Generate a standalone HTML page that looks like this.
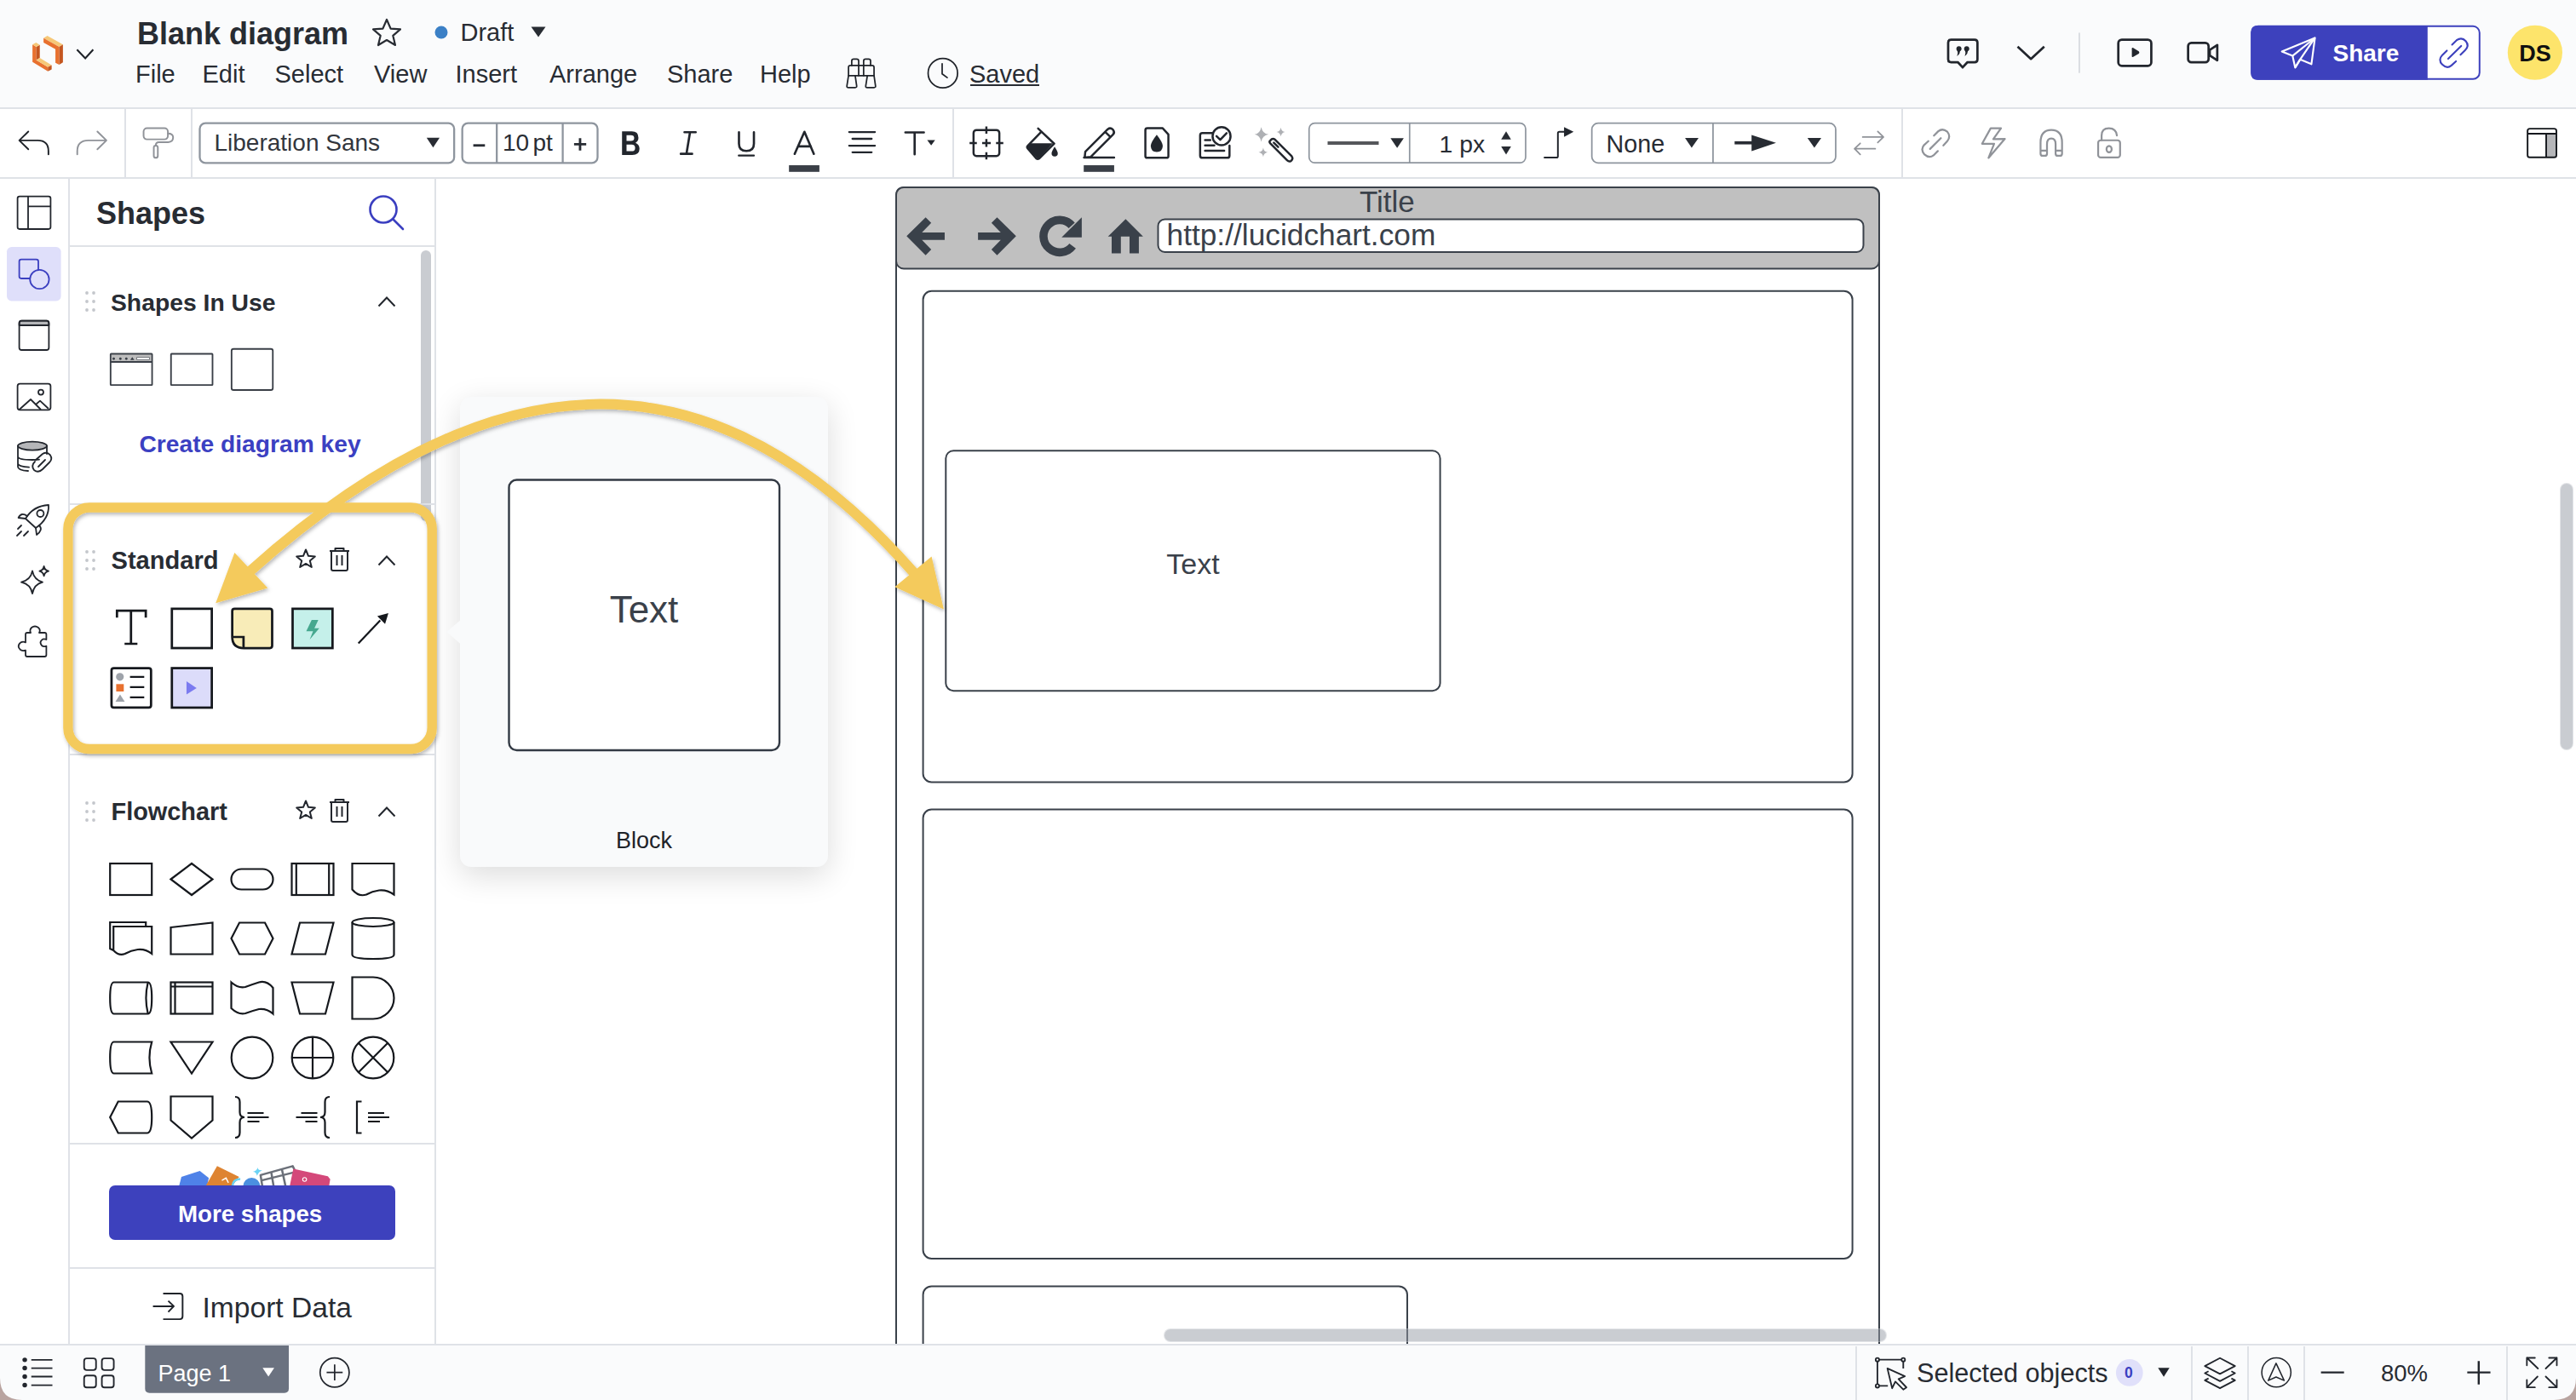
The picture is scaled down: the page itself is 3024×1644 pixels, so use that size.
<!DOCTYPE html>
<html><head><meta charset="utf-8"><style>
html,body{margin:0;padding:0;}
body{width:3024px;height:1644px;position:relative;overflow:hidden;background:#fff;font-family:"Liberation Sans", sans-serif;}
svg{overflow:visible}
</style></head><body>
<div style="position:absolute;left:0px;top:0px;width:3024px;height:126px;background:#fafbfc"></div><div style="position:absolute;left:0px;top:126px;width:3024px;height:2px;background:#dfe2e7"></div><div style="position:absolute;left:0px;top:128px;width:3024px;height:80px;background:#fff"></div><div style="position:absolute;left:0px;top:208px;width:3024px;height:2px;background:#dfe2e7"></div><div style="position:absolute;left:0px;top:210px;width:80px;height:1369px;background:#fff"></div><div style="position:absolute;left:80px;top:210px;width:2px;height:1369px;background:#dfe2e7"></div><div style="position:absolute;left:82px;top:210px;width:428px;height:1369px;background:#fff"></div><div style="position:absolute;left:510px;top:210px;width:2px;height:1369px;background:#dfe2e7"></div><div style="position:absolute;left:0px;top:1578px;width:3024px;height:2px;background:#dfe2e7"></div><div style="position:absolute;left:0px;top:1580px;width:3024px;height:64px;background:#fafbfc"></div><svg style="position:absolute;left:30px;top:30px;" width="90" height="65" viewBox="0 0 1938 1400">
<polygon points="175,480 270,540 270,870 565,1050 565,1160 175,920" fill="#e8712f"/>
<polygon points="270,540 360,490 360,820 270,870" fill="#c4561f"/>
<polygon points="175,480 265,430 360,490 270,540" fill="#f6c878"/>
<polygon points="270,870 360,820 660,1000 565,1050" fill="#f6c878"/>
<polygon points="565,1050 660,1000 660,1110 565,1160" fill="#c4561f"/>
<polygon points="455,320 550,260 945,480 850,540" fill="#f6c878"/>
<polygon points="455,320 850,540 850,990 755,940 755,600 455,430" fill="#e8712f"/>
<polygon points="850,540 945,480 945,930 850,990" fill="#c4561f"/>
<polyline points="1300,610 1510,830 1710,610" fill="none" stroke="#1f2329" stroke-width="45"/>
</svg><div style="position:absolute;left:161px;top:22.0px;font-size:36px;line-height:36px;font-weight:700;color:#282c33;white-space:nowrap;">Blank diagram</div><svg style="position:absolute;left:436px;top:21px;" width="36" height="34" viewBox="0 0 36 34"><polygon points="18,2 22.6,12.6 34,13.4 25.3,20.8 28,32 18,26 8,32 10.7,20.8 2,13.4 13.4,12.6" fill="none" stroke="#282c33" stroke-width="2.2" stroke-linejoin="round"/></svg><svg style="position:absolute;left:510px;top:30px;" width="16" height="16" viewBox="0 0 16 16"><circle cx="8" cy="8" r="7.5" fill="#3b80c6"/></svg><div style="position:absolute;left:540.5px;top:23.5px;font-size:29px;line-height:29px;font-weight:400;color:#282c33;white-space:nowrap;">Draft</div><svg style="position:absolute;left:623px;top:31px;" width="18" height="13" viewBox="0 0 18 13"><polygon points="0.5,0.5 17.5,0.5 9,12.5" fill="#282c33"/></svg><div style="position:absolute;left:159px;top:72.5px;font-size:29px;line-height:29px;font-weight:400;color:#282c33;white-space:nowrap;">File</div><div style="position:absolute;left:237.5px;top:72.5px;font-size:29px;line-height:29px;font-weight:400;color:#282c33;white-space:nowrap;">Edit</div><div style="position:absolute;left:322.5px;top:72.5px;font-size:29px;line-height:29px;font-weight:400;color:#282c33;white-space:nowrap;">Select</div><div style="position:absolute;left:439px;top:72.5px;font-size:29px;line-height:29px;font-weight:400;color:#282c33;white-space:nowrap;">View</div><div style="position:absolute;left:534.5px;top:72.5px;font-size:29px;line-height:29px;font-weight:400;color:#282c33;white-space:nowrap;">Insert</div><div style="position:absolute;left:645px;top:72.5px;font-size:29px;line-height:29px;font-weight:400;color:#282c33;white-space:nowrap;">Arrange</div><div style="position:absolute;left:783px;top:72.5px;font-size:29px;line-height:29px;font-weight:400;color:#282c33;white-space:nowrap;">Share</div><div style="position:absolute;left:892px;top:72.5px;font-size:29px;line-height:29px;font-weight:400;color:#282c33;white-space:nowrap;">Help</div><div style="position:absolute;left:1138px;top:72.5px;font-size:29px;line-height:29px;font-weight:400;color:#282c33;white-space:nowrap;">Saved</div><div style="position:absolute;left:1139px;top:99px;width:81px;height:2px;background:#282c33"></div><svg style="position:absolute;left:985px;top:60px;" width="150" height="52" viewBox="0 0 2576 893">
<g fill="none" stroke="#1f2329" stroke-width="30" stroke-linejoin="round" stroke-linecap="round">
<path d="M255,290 V200 Q255,160 295,160 H355 Q395,160 395,200 V290"/>
<path d="M495,290 V200 Q495,160 535,160 H595 Q635,160 635,200 V290"/>
<path d="M190,495 V330 Q190,290 230,290 H665 Q705,290 705,330 V495 Z"/>
<path d="M395,290 V495 M495,290 V495"/>
<path d="M190,495 L158,700 Q152,735 190,735 H325 Q360,735 355,700 L325,495"/>
<path d="M570,495 L538,700 Q532,735 570,735 H705 Q740,735 735,700 L705,495"/>
<circle cx="2092" cy="445" r="297"/>
<path d="M2078,255 V460 L2180,535"/>
</g>
</svg><svg style="position:absolute;left:2270px;top:30px;" width="350" height="70" viewBox="0 0 2576 515">
<g fill="none" stroke="#22262d" stroke-width="20" stroke-linejoin="round">
<path d="M150,122 H353 Q378,122 378,147 V293 Q378,318 353,318 H290 L250,362 L210,318 H150 Q125,318 125,293 V147 Q125,122 150,122 Z"/>
<polyline points="725,182 840,288 955,182"/>
<rect x="1595" y="122" width="285" height="226" rx="30"/>
<rect x="2198" y="150" width="177" height="168" rx="28"/>
<path d="M2385,210 L2450,168 V300 L2385,258 Z"/>
</g>
<g fill="#22262d">
<circle cx="218" cy="200" r="22"/><path d="M228,205 Q232,245 202,265 Q214,235 202,210 Z"/>
<circle cx="285" cy="200" r="22"/><path d="M295,205 Q299,245 269,265 Q281,235 269,210 Z"/>
<path d="M1712,200 Q1712,188 1724,194 L1772,222 Q1782,234 1772,242 L1724,270 Q1712,276 1712,264 Z"/>
</g>
<line x1="1258" y1="62" x2="1258" y2="410" stroke="#d9dce1" stroke-width="14"/>
</svg><svg style="position:absolute;left:2630px;top:20px;" width="394" height="85" viewBox="0 0 2576 556">
<rect x="86" y="71" width="1750" height="405" rx="50" fill="#fff" stroke="#3d41bd" stroke-width="13"/>
<path d="M130,65 H1437 V482 H130 Q80,482 80,432 V115 Q80,65 130,65 Z" fill="#3d41bd"/>
<g fill="none" stroke="#fff" stroke-width="14" stroke-linejoin="round">
<path d="M318,265 L572,160 L545,362 L458,326 L420,388 L400,298 Z"/>
<path d="M400,298 L572,160"/><path d="M420,388 L458,326 L572,160"/>
</g>
<g fill="none" stroke="#3d41bd" stroke-width="14" stroke-linecap="round">
<path d="M1625,212 L1660,178 Q1700,150 1730,185 Q1760,220 1725,255 L1690,290"/>
<path d="M1655,340 L1620,372 Q1585,400 1550,365 Q1515,330 1550,292 L1585,258"/>
<path d="M1595,320 L1695,222"/>
</g>
<circle cx="2262" cy="273" r="210" fill="#fde46b"/>
</svg><div style="position:absolute;left:2738.5px;top:49.1px;font-size:28px;line-height:28px;font-weight:700;color:#fff;white-space:nowrap;">Share</div><div style="position:absolute;left:2957.2px;top:49.9px;font-size:27px;line-height:27px;font-weight:700;color:#111;white-space:nowrap;">DS</div><div style="position:absolute;left:146px;top:128px;width:2px;height:80px;background:#dfe2e7"></div><div style="position:absolute;left:223.5px;top:128px;width:2px;height:80px;background:#dfe2e7"></div><div style="position:absolute;left:1118px;top:128px;width:2px;height:80px;background:#dfe2e7"></div><div style="position:absolute;left:2232px;top:128px;width:2px;height:80px;background:#dfe2e7"></div><svg style="position:absolute;left:10px;top:140px;" width="210" height="60" viewBox="0 0 2576 736">
<g fill="none" stroke-width="24" stroke-linecap="round" stroke-linejoin="round">
<path d="M285,178 L155,305 L285,432 M155,305 H420 Q575,305 575,460 V505" stroke="#1f2329"/>
<path d="M1280,178 L1410,305 L1280,432 M1410,305 H1150 Q990,305 990,460 V505" stroke="#909399"/>
<rect x="1945" y="128" width="350" height="162" rx="50" stroke="#909399"/>
<path d="M2295,205 Q2370,205 2370,262 Q2370,330 2300,330 H2165 Q2120,330 2120,380" stroke="#909399"/>
<rect x="2092" y="380" width="58" height="175" rx="29" stroke="#909399"/>
</g>
</svg><svg style="position:absolute;left:225px;top:138px;" width="490" height="60" viewBox="0 0 2576 315">
<g fill="none" stroke="#8e959e" stroke-width="12">
<rect x="50" y="35" width="1570" height="245" rx="35"/>
<rect x="1670" y="35" width="835" height="245" rx="35"/>
<path d="M1883,35 V280 M2290,35 V280"/>
</g>
<polygon points="1450,125 1530,125 1490,185" fill="#282c33"/>
<path d="M1738,172 H1810" stroke="#282c33" stroke-width="15"/>
<path d="M2360,165 H2435 M2397,127 V203" stroke="#282c33" stroke-width="15"/>
</svg><div style="position:absolute;left:251.5px;top:154.3px;font-size:28px;line-height:28px;font-weight:400;color:#32363d;white-space:nowrap;">Liberation Sans</div><div style="position:absolute;left:590px;top:153.8px;font-size:28px;line-height:28px;font-weight:400;color:#282c33;white-space:nowrap;">10</div><div style="position:absolute;left:625.5px;top:153.8px;font-size:28px;line-height:28px;font-weight:400;color:#282c33;white-space:nowrap;">pt</div><svg style="position:absolute;left:715px;top:140px;" width="400" height="66" viewBox="0 0 2576 425">
<path fill="#22262d" fill-rule="evenodd" d="M98,92 H172 Q222,92 222,140 Q222,166 200,178 Q230,192 230,224 Q230,270 175,270 H98 Z M132,120 V165 H165 Q190,165 190,142 Q190,120 165,120 Z M132,192 V242 H170 Q197,242 197,217 Q197,192 170,192 Z"/>
<g fill="none" stroke="#22262d" stroke-width="17" stroke-linecap="round" stroke-linejoin="round">
<path d="M570,98 H655 M542,262 H628 M612,98 L585,262"/>
<path d="M982,98 V185 Q982,240 1038,240 Q1095,240 1095,185 V98"/>
<path d="M980,275 H1095" stroke-width="14"/>
<path d="M1403,262 L1477,95 L1548,262 M1430,205 H1525"/>
<path d="M1815,97 H2010 M1840,148 H1985 M1815,200 H2010 M1840,250 H1985" stroke-width="15"/>
<path d="M2240,100 H2380 M2310,100 V265"/>
</g>
<polygon points="2405,157 2465,157 2435,198" fill="#22262d"/>
<rect x="1360" y="348" width="230" height="50" fill="#3a3f47"/>
</svg><svg style="position:absolute;left:1125px;top:140px;" width="400" height="66" viewBox="0 0 2576 425">
<g fill="none" stroke="#22262d" stroke-width="16" stroke-linecap="round" stroke-linejoin="round">
<rect x="115" y="82" width="195" height="196" rx="22"/>
<path d="M212,55 V110 M212,150 V210 M212,250 V305 M85,180 H140 M180,180 H245 M285,180 H340" stroke-linecap="butt"/>
<path d="M603,70 L725,185 L610,298 Q600,305 590,298 L525,222 Q515,210 525,200 L625,98"/>
<path d="M960,245 L1130,75 Q1150,60 1170,80 Q1185,100 1170,115 L1000,285 L955,290 Z M1110,95 L1150,135 M950,290 H1178"/>
<path d="M1430,68 H1545 L1588,115 V278 Q1588,292 1574,292 H1428 Q1414,292 1414,278 V82 Q1414,68 1430,68 Z"/>
<path d="M1918,105 H1845 Q1828,105 1828,122 V275 Q1828,292 1845,292 H2033 Q2050,292 2050,275 V200"/>
<circle cx="1990" cy="128" r="68"/>
<path d="M1952,128 L1980,155 L2028,105 M1865,158 H1905 M1865,198 H1935 M1865,238 H2010"/>
</g>
<path d="M550,182 H715 L610,295 Q603,302 595,295 L525,220 Q518,210 525,200 Z" fill="#22262d"/>
<path d="M728,208 Q752,245 752,258 Q752,282 728,282 Q705,282 705,258 Q705,245 728,208 Z" fill="#22262d"/>
<path d="M1500,118 Q1545,175 1545,202 Q1545,248 1500,248 Q1455,248 1455,202 Q1455,175 1500,118 Z" fill="#22262d"/>
<rect x="948" y="348" width="230" height="50" fill="#3a3f47"/>
<g fill="#aeb0b4">
<path d="M2290,60 Q2300,110 2345,115 Q2300,122 2290,170 Q2280,122 2240,115 Q2280,110 2290,60 Z"/>
<path d="M2438,62 Q2443,92 2470,97 Q2443,102 2438,130 Q2433,102 2405,97 Q2433,92 2438,62 Z"/>
<path d="M2305,215 Q2310,245 2338,250 Q2310,255 2305,285 Q2300,255 2270,250 Q2300,245 2305,215 Z"/>
</g>
<g fill="none" stroke="#22262d" stroke-width="16" stroke-linejoin="round">
<path d="M2360,160 Q2375,140 2395,155 L2520,280 Q2535,300 2515,315 Q2500,325 2485,310 L2360,185 Q2345,170 2360,160 Z"/>
<path d="M2385,178 L2418,210" stroke-linecap="round"/>
</g>
</svg><svg style="position:absolute;left:1530px;top:140px;" width="340" height="60" viewBox="0 0 2576 455">
<g fill="none" stroke="#8e959e" stroke-width="13">
<rect x="50" y="35" width="1928" height="353" rx="50"/>
<path d="M945,35 V388"/>
</g>
<path d="M215,212 H670" stroke="#55575b" stroke-width="30"/>
<polygon points="775,168 893,168 834,255" fill="#282c33"/>
<polygon points="1760,180 1848,180 1804,108" fill="#282c33"/>
<polygon points="1760,243 1848,243 1804,315" fill="#282c33"/>
<path d="M2140,342 H2252 Q2265,342 2265,330 V125 Q2265,112 2278,112 H2330" fill="none" stroke="#22262d" stroke-width="15"/>
<polygon points="2320,70 2405,112 2320,158" fill="#22262d"/>
</svg><div style="position:absolute;left:1689.5px;top:155.2px;font-size:28.4px;line-height:28.4px;font-weight:400;color:#282c33;white-space:nowrap;">1 px</div><svg style="position:absolute;left:1860px;top:140px;" width="380" height="60" viewBox="0 0 2576 407">
<g fill="none" stroke="#8e959e" stroke-width="12">
<rect x="58" y="32" width="1942" height="316" rx="50"/>
<path d="M1023,32 V348"/>
</g>
<polygon points="800,150 908,150 853,228" fill="#282c33"/>
<path d="M1195,188 H1340" stroke="#282c33" stroke-width="25"/>
<polygon points="1330,125 1525,188 1330,255" fill="#282c33"/>
<polygon points="1775,150 1885,150 1830,228" fill="#282c33"/>
<g fill="none" stroke="#909399" stroke-width="12" stroke-linecap="round" stroke-linejoin="round">
<path d="M2215,142 H2380 M2335,98 L2380,142 L2335,185"/>
<path d="M2315,235 H2150 M2195,192 L2150,235 L2195,280"/>
</g>
</svg><div style="position:absolute;left:1885.5px;top:154.8px;font-size:28.7px;line-height:28.7px;font-weight:400;color:#282c33;white-space:nowrap;">None</div><svg style="position:absolute;left:2240px;top:140px;" width="260" height="60" viewBox="0 0 2576 594">
<g fill="none" stroke="#909399" stroke-width="22" stroke-linecap="round" stroke-linejoin="round">
<path d="M300,190 L350,140 Q400,100 455,145 Q500,200 455,255 L410,305 M345,370 L295,420 Q245,460 190,410 Q140,355 185,300 L235,255 M255,345 L380,220"/>
<polygon points="960,105 1080,105 990,232 1125,228 935,450 1000,285 860,285"/>
<path d="M1540,400 V270 Q1540,125 1665,125 Q1790,125 1790,270 V400 Q1790,425 1765,425 H1740 Q1715,425 1715,400 V290 Q1715,225 1665,225 Q1615,225 1615,290 V400 Q1615,425 1590,425 H1565 Q1540,425 1540,400 Z M1540,365 H1615 M1715,365 H1790"/>
<rect x="2210" y="245" width="255" height="200" rx="30"/>
<path d="M2250,245 V190 Q2250,105 2335,105 Q2420,105 2428,190"/>
<ellipse cx="2337" cy="348" rx="30" ry="38"/>
</g>
</svg><svg style="position:absolute;left:2950px;top:140px;" width="70" height="60" viewBox="0 0 1633 1400">
<rect x="930" y="415" width="240" height="610" fill="#b5b6b9"/>
<g fill="none" stroke="#15181d" stroke-width="45">
<rect x="400" y="260" width="790" height="785" rx="60"/>
<path d="M400,395 H1190 M910,395 V1045"/>
</g>
</svg><svg style="position:absolute;left:0px;top:215px;" width="80" height="280" viewBox="0 0 400 1400">
<rect x="40" y="375" width="318" height="317" rx="28" fill="#dfdffa"/>
<g fill="none" stroke="#22262d" stroke-width="9" stroke-linejoin="round">
<rect x="103" y="78" width="194" height="192" rx="12"/>
<path d="M165,78 V270 M165,137 H297"/>
<path d="M113,835 V822 Q113,808 127,808 H273 Q287,808 287,822 V835 Z" fill="#b5b6b9"/>
<rect x="113" y="808" width="174" height="172" rx="14"/>
<path d="M113,835 H287"/>
<rect x="103" y="1178" width="194" height="154" rx="14"/>
<circle cx="240" cy="1228" r="15"/>
<path d="M113,1330 L180,1270 L240,1330 M210,1300 L235,1278 L285,1325"/>
</g>
<g fill="none" stroke="#3b3fc0" stroke-width="9">
<path d="M225,512 V460 Q225,448 213,448 H125 Q113,448 113,460 V548 Q113,560 125,560 H176"/>
<circle cx="232" cy="565" r="56"/>
</g>
</svg><svg style="position:absolute;left:0px;top:500px;" width="80" height="280" viewBox="0 0 400 1400">
<g fill="none" stroke="#22262d" stroke-width="9" stroke-linejoin="round" stroke-linecap="round">
<ellipse cx="190" cy="118" rx="85" ry="25" fill="#b5b6b9"/>
<path d="M105,118 V240 Q105,262 165,265 M105,180 Q105,200 190,200 Q215,200 230,198 M105,222 Q110,240 170,243 M275,118 V165"/>
<path d="M210,200 L250,165 Q275,150 295,172 Q310,195 290,215 L250,255 Q225,280 200,260 Q180,235 205,210"/>
<path d="M225,240 L265,200"/>
<path d="M150,545 Q195,470 285,465 Q290,545 210,600 Z"/>
<circle cx="237" cy="515" r="20"/>
<path d="M160,530 Q125,505 108,540 L150,545 M230,585 Q255,610 215,640 L210,600"/>
<path d="M100,645 L125,620 M140,645 L165,620 M105,605 L125,585"/>
<path d="M190,852 Q200,905 250,918 Q200,930 190,985 Q180,930 125,918 Q180,905 190,852 Z"/>
<path d="M258,825 Q262,848 285,853 Q262,858 258,882 Q254,858 232,853 Q254,848 258,825 Z"/>
<path d="M150,1235 V1225 Q150,1215 160,1215 H180 Q172,1198 185,1185 Q205,1170 225,1185 Q240,1198 230,1215 H262 Q272,1215 272,1225 V1255 Q255,1248 245,1258 Q230,1272 245,1290 Q255,1300 272,1293 V1345 Q272,1355 262,1355 H160 Q150,1355 150,1345 V1318 Q135,1325 120,1315 Q100,1298 115,1278 Q130,1262 150,1272 Z"/>
</g>
</svg><div style="position:absolute;left:113px;top:233.0px;font-size:36px;line-height:36px;font-weight:700;color:#282c33;white-space:nowrap;">Shapes</div><svg style="position:absolute;left:430px;top:226px;" width="50" height="46" viewBox="0 0 50 46"><g fill="none" stroke="#3b3fc0" stroke-width="2.6" stroke-linecap="round"><circle cx="20" cy="20" r="15.5"/><path d="M31.5,31.5 L43,43"/></g></svg><div style="position:absolute;left:82px;top:288px;width:428px;height:2px;background:#dfe2e7"></div><div style="position:absolute;left:494px;top:294px;width:12px;height:318px;background:#c9ccd1;border-radius:6px"></div><svg style="position:absolute;left:100px;top:342px;" width="12" height="24" viewBox="0 0 12 24"><circle cx="2" cy="2" r="1.9" fill="#c4c7cc"/><circle cx="2" cy="12" r="1.9" fill="#c4c7cc"/><circle cx="2" cy="22" r="1.9" fill="#c4c7cc"/><circle cx="10" cy="2" r="1.9" fill="#c4c7cc"/><circle cx="10" cy="12" r="1.9" fill="#c4c7cc"/><circle cx="10" cy="22" r="1.9" fill="#c4c7cc"/></svg><div style="position:absolute;left:130px;top:341.0px;font-size:28.3px;line-height:28.3px;font-weight:700;color:#282c33;white-space:nowrap;">Shapes In Use</div><svg style="position:absolute;left:443px;top:347px;" width="22" height="14" viewBox="0 0 22 14"><polyline points="1.5,12.5 11,2.5 20.5,12.5" fill="none" stroke="#22262d" stroke-width="2"/></svg><svg style="position:absolute;left:90px;top:330px;" width="400" height="140" viewBox="0 0 2576 902">
<path d="M260,555 H565 V612 H260 Z" fill="#bdbdbd"/>
<rect x="455" y="578" width="95" height="18" fill="#fff" stroke="#3a3f47" stroke-width="4"/>
<g fill="#3a3f47"><circle cx="280" cy="588" r="9"/><circle cx="330" cy="588" r="9"/><circle cx="375" cy="588" r="9"/><path d="M405,598 L420,575 L435,598 Z"/></g>
<g fill="none" stroke="#3a3f47" stroke-width="12" stroke-linejoin="round">
<rect x="256" y="551" width="314" height="236" rx="4"/>
<path d="M256,612 H570"/>
<rect x="713" y="551" width="314" height="236" rx="4"/>
<rect x="1171" y="514" width="312" height="311" rx="15"/>
</g>
</svg><div style="position:absolute;left:163.5px;top:507.1px;font-size:28.2px;line-height:28.2px;font-weight:700;color:#3b40c2;white-space:nowrap;">Create diagram key</div><div style="position:absolute;left:82px;top:591px;width:428px;height:2px;background:#dfe2e7"></div><svg style="position:absolute;left:100px;top:646px;" width="12" height="24" viewBox="0 0 12 24"><circle cx="2" cy="2" r="1.9" fill="#c4c7cc"/><circle cx="2" cy="12" r="1.9" fill="#c4c7cc"/><circle cx="2" cy="22" r="1.9" fill="#c4c7cc"/><circle cx="10" cy="2" r="1.9" fill="#c4c7cc"/><circle cx="10" cy="12" r="1.9" fill="#c4c7cc"/><circle cx="10" cy="22" r="1.9" fill="#c4c7cc"/></svg><div style="position:absolute;left:130.5px;top:644.1px;font-size:29.1px;line-height:29.1px;font-weight:700;color:#282c33;white-space:nowrap;">Standard</div><svg style="position:absolute;left:346.5px;top:643px;" width="70" height="30" viewBox="0 0 70 30"><g fill="none" stroke="#22262d" stroke-width="2" stroke-linejoin="round">
<polygon points="12,2.5 15,9.8 22.8,10.4 16.8,15.4 18.8,23 12,18.9 5.2,23 7.2,15.4 1.2,10.4 9,9.8"/>
<path d="M40,4 H63 M46.5,4 V1 H56.5 V4 M42,4 V25 Q42,27 44,27 H59 Q61,27 61,25 V4 M48.5,9 V21 M54.5,9 V21"/>
</g></svg><svg style="position:absolute;left:443px;top:651px;" width="22" height="14" viewBox="0 0 22 14"><polyline points="1.5,12.5 11,2.5 20.5,12.5" fill="none" stroke="#22262d" stroke-width="2"/></svg><svg style="position:absolute;left:60px;top:580px;" width="460" height="320" viewBox="0 0 2012 1400">
<g fill="none" stroke="#15181d" stroke-width="12">
<path d="M338,635 V600 H486 V635 M410,600 V770 M377,770 H443"/>
<rect x="620" y="590" width="205" height="202"/>
<path d="M942,590 H1123 Q1135,590 1135,602 V780 Q1135,792 1123,792 H990 Q930,792 930,735 V602 Q930,590 942,590 Z" fill="#f8ecb8"/>
<path d="M930,735 H988 V792" fill="#f8ecb8"/>
<rect x="1240" y="590" width="205" height="202" fill="#c5f0ea"/>
<path d="M1578,768 L1690,650" stroke-width="10"/>
<rect x="310" y="895" width="203" height="203" rx="12"/>
<path d="M405,940 H478 M405,993 H478 M405,1045 H478" stroke-width="10"/>
<rect x="620" y="895" width="205" height="203" fill="#dcdcfa"/>
</g>
<polygon points="1338,648 1372,648 1352,690 1377,690 1328,748 1345,705 1310,705" fill="#46a88f"/>
<polygon points="1675,628 1732,612 1715,668" fill="#15181d"/>
<circle cx="353" cy="940" r="20" fill="#9ea3aa"/>
<rect x="334" y="977" width="39" height="38" fill="#e8712f"/>
<polygon points="330,1068 378,1068 354,1030" fill="#9ea3aa"/>
<polygon points="695,963 747,997 695,1030" fill="#7b7bf0"/>
</svg><div style="position:absolute;left:82px;top:885px;width:428px;height:2px;background:#dfe2e7"></div><svg style="position:absolute;left:100px;top:941px;" width="12" height="24" viewBox="0 0 12 24"><circle cx="2" cy="2" r="1.9" fill="#c4c7cc"/><circle cx="2" cy="12" r="1.9" fill="#c4c7cc"/><circle cx="2" cy="22" r="1.9" fill="#c4c7cc"/><circle cx="10" cy="2" r="1.9" fill="#c4c7cc"/><circle cx="10" cy="12" r="1.9" fill="#c4c7cc"/><circle cx="10" cy="22" r="1.9" fill="#c4c7cc"/></svg><div style="position:absolute;left:130.5px;top:938.8px;font-size:28.9px;line-height:28.9px;font-weight:700;color:#282c33;white-space:nowrap;">Flowchart</div><svg style="position:absolute;left:346.5px;top:938px;" width="70" height="30" viewBox="0 0 70 30"><g fill="none" stroke="#22262d" stroke-width="2" stroke-linejoin="round">
<polygon points="12,2.5 15,9.8 22.8,10.4 16.8,15.4 18.8,23 12,18.9 5.2,23 7.2,15.4 1.2,10.4 9,9.8"/>
<path d="M40,4 H63 M46.5,4 V1 H56.5 V4 M42,4 V25 Q42,27 44,27 H59 Q61,27 61,25 V4 M48.5,9 V21 M54.5,9 V21"/>
</g></svg><svg style="position:absolute;left:443px;top:945.5px;" width="22" height="14" viewBox="0 0 22 14"><polyline points="1.5,12.5 11,2.5 20.5,12.5" fill="none" stroke="#22262d" stroke-width="2"/></svg><svg style="position:absolute;left:0px;top:0px;pointer-events:none;" width="600" height="1400" viewBox="0 0 600 1400"><g fill="none" stroke="#15181d" stroke-width="2.2" stroke-linejoin="miter"><g transform="translate(153.7,1032.5)"><rect x="-24.5" y="-18.5" width="49.0" height="37.0"/></g><g transform="translate(225,1032.5)"><polygon points="-24.5,0 0,-18.5 24.5,0 0,18.5"/></g><g transform="translate(296,1032.5)"><rect x="-24.5" y="-12" width="49.0" height="24" rx="12"/></g><g transform="translate(367,1032.5)"><rect x="-24.5" y="-18.5" width="49.0" height="37.0"/><path d="M-19.2,-18.5 V18.5 M19.2,-18.5 V18.5"/></g><g transform="translate(438,1032.5)"><path d="M-24.5,-18.5 H24.5 V18 Q16,12 7,13 Q-1,14 -8,18 Q-17,21 -24.5,12 Z"/></g><g transform="translate(153.7,1102)"><path d="M-24.5,-12 V-19 H17.5 V-14"/><path d="M-24.5,-12 V12 L-20.5,14 M-20.5,-14 H24.5 V18 Q17,12 8,13 Q0,14 -7,18 Q-14,21 -20.5,14 Z"/></g><g transform="translate(225,1102)"><polygon points="-24.5,-13 24.5,-18.5 24.5,18.5 -24.5,18.5"/></g><g transform="translate(296,1102)"><polygon points="-24.5,0 -15,-18.5 15,-18.5 24.5,0 15,18.5 -15,18.5"/></g><g transform="translate(367,1102)"><polygon points="-15,-18.5 24.5,-18.5 15,18.5 -24.5,18.5"/></g><g transform="translate(438,1102)"><path d="M-24.5,-19 V19 Q-24.5,24 0,24 Q24.5,24 24.5,19 V-19"/><ellipse cx="0" cy="-19" rx="24.5" ry="5"/></g><g transform="translate(153.7,1172)"><path d="M-20,-18.5 H20 Q24.5,-18.5 24.5,0 Q24.5,18.5 20,18.5 H-20 Q-24.5,18.5 -24.5,0 Q-24.5,-18.5 -20,-18.5 Z M20,-18.5 Q15.5,0 20,18.5"/></g><g transform="translate(225,1172)"><rect x="-24.5" y="-18.5" width="49.0" height="37.0"/><path d="M-19.5,-18.5 V18.5 M-24.5,-13.5 H24.5"/></g><g transform="translate(296,1172)"><path d="M-24.5,-18.5 Q-16,-11 -8,-13 Q0,-16 8,-18.5 Q17,-21 24.5,-12 V18.5 Q17,12 8,13 Q0,15 -8,18 Q-16,20 -24.5,12 Z"/></g><g transform="translate(367,1172)"><polygon points="-24.5,-18.5 24.5,-18.5 15,18.5 -15,18.5"/></g><g transform="translate(438,1172)"><path d="M-24.5,-24.5 H0 A24.5,24.5 0 0 1 0,24.5 H-24.5 Z"/></g><g transform="translate(153.7,1242)"><path d="M-20,-18.5 H24.5 Q19,0 24.5,18.5 H-20 Q-24.5,18.5 -24.5,0 Q-24.5,-18.5 -20,-18.5 Z"/></g><g transform="translate(225,1242)"><polygon points="-24.5,-18.5 24.5,-18.5 0,18.5"/></g><g transform="translate(296,1242)"><circle r="24.3"/></g><g transform="translate(367,1242)"><circle r="24.3"/><path d="M0,-24.3 V24.3 M-24.3,0 H24.3"/></g><g transform="translate(438,1242)"><circle r="24.3"/><path d="M-17.2,-17.2 L17.2,17.2 M17.2,-17.2 L-17.2,17.2"/></g><g transform="translate(153.7,1312)"><path d="M-24.5,0 L-15,-18.5 H19 Q24.5,-18.5 24.5,0 Q24.5,18.5 19,18.5 H-15 Z"/></g><g transform="translate(225,1312)"><polygon points="-24.5,-24.5 24.5,-24.5 24.5,3.5 0,24.5 -24.5,3.5"/></g><g transform="translate(296,1312)"><path d="M-20,-24 Q-14.5,-24 -14.5,-18 V-6 Q-14.5,0 -9,0 Q-14.5,0 -14.5,6 V18 Q-14.5,24 -20,24"/><path d="M-5.5,-5 H13.5 M-5.5,0 H19.5 M-5.5,5 H8.5" stroke-width="2"/></g><g transform="translate(367,1312)"><path d="M20,-24 Q14.5,-24 14.5,-18 V-6 Q14.5,0 9,0 Q14.5,0 14.5,6 V18 Q14.5,24 20,24"/><path d="M5.5,-5 H-13.5 M5.5,0 H-19.5 M5.5,5 H-8.5" stroke-width="2"/></g><g transform="translate(438,1312)"><path d="M-13.5,-18.5 H-19 V18.5 H-13.5"/><path d="M-6,-5 H13 M-6,0 H19 M-6,5 H8" stroke-width="2"/></g></g></svg><div style="position:absolute;left:82px;top:1342px;width:428px;height:2px;background:#dfe2e7"></div><svg style="position:absolute;left:120px;top:1340px;" width="360" height="130" viewBox="0 0 2576 930">
<polygon points="645,380 665,300 820,250 895,310 880,380" fill="#4f82e8"/>
<polygon points="868,380 965,210 1150,300 1090,380" fill="#de8432"/>
<path d="M1005,330 L1040,310 L1060,350" fill="none" stroke="#fff" stroke-width="10"/>
<circle cx="1255" cy="380" r="72" fill="#4b8fe0"/>
<path d="M1095,372 Q1100,320 1160,318" fill="none" stroke="#6bd3f5" stroke-width="18"/>
<path d="M1305,222 Q1310,250 1345,245 Q1315,255 1300,292 Q1295,258 1265,258 Q1300,250 1305,222 Z" fill="#6bd3f5"/>
<g fill="none" stroke="#6b7079" stroke-width="18" stroke-linejoin="round">
<path d="M1345,380 L1330,285 L1600,210 L1615,240 L1640,380"/>
<path d="M1340,330 L1620,260 M1420,262 L1440,380 M1510,240 L1540,380"/>
</g>
<polygon points="1575,380 1605,232 1895,295 1915,320 1905,380" fill="#d4487a"/>
<circle cx="1700" cy="322" r="16" fill="none" stroke="#fff" stroke-width="8"/>
</svg><div style="position:absolute;left:128px;top:1392px;width:336px;height:64px;background:#3d41bd;border-radius:7px"></div><div style="position:absolute;left:209px;top:1411.6px;font-size:27.7px;line-height:27.7px;font-weight:700;color:#fff;white-space:nowrap;">More shapes</div><div style="position:absolute;left:82px;top:1488px;width:428px;height:2px;background:#dfe2e7"></div><svg style="position:absolute;left:160px;top:1485px;" width="280" height="100" viewBox="0 0 2576 920">
<g fill="none" stroke="#1f2329" stroke-width="18" stroke-linejoin="round">
<path d="M290,312 H470 Q500,312 500,342 V560 Q500,590 470,590 H290"/>
<path d="M180,450 H405 M345,392 L405,450 L345,512"/>
</g>
</svg><div style="position:absolute;left:237.5px;top:1518.6px;font-size:33.6px;line-height:33.6px;font-weight:400;color:#282c33;white-space:nowrap;">Import Data</div><svg style="position:absolute;left:512px;top:210px;overflow:hidden;" width="2512" height="1368" viewBox="512 210 2512 1368">
<g fill="none" stroke="#3a414a" stroke-width="2">
<path d="M1052,1600 V230 Q1052,220 1062,220 H2196 Q2206,220 2206,230 V1600"/>
<rect x="1083.6" y="341.8" width="1091" height="576.6" rx="10" fill="#fff"/>
<rect x="1110.3" y="529.2" width="580.3" height="282" rx="9" fill="#fff"/>
<rect x="1083.6" y="950.6" width="1091" height="527.4" rx="10" fill="#fff"/>
<rect x="1083.6" y="1510.4" width="568.4" height="200" rx="10" fill="#fff"/>
<rect x="1052" y="220" width="1154" height="95.5" rx="9" fill="#c0c0c0"/>
<rect x="1359.5" y="257.4" width="828" height="38.6" rx="8" fill="#fff"/>
</g>
</svg><svg style="position:absolute;left:1045px;top:212px;" width="320" height="108" viewBox="0 0 2576 869">
<g fill="#3a414a">
<polygon points="155,525 335,348 388,400 300,490 515,490 515,562 300,562 388,652 335,706"/>
<polygon points="1190,525 1010,348 957,400 1045,490 830,490 830,562 1045,562 957,652 1010,706"/>
<polygon points="1620,537 1810,537 1810,348"/>
<polygon points="2058,530 2225,365 2390,530 2350,530 2350,688 2262,688 2262,530 2180,530 2180,688 2093,688 2093,530"/>
</g>
<path d="M1724,618 A153,153 0 1 1 1716,424" fill="none" stroke="#3a414a" stroke-width="77"/>
</svg><div style="position:absolute;left:1596px;top:219.4px;font-size:35px;line-height:35px;font-weight:400;color:#3a414a;white-space:nowrap;">Title</div><div style="position:absolute;left:1369.5px;top:258.0px;font-size:35.3px;line-height:35.3px;font-weight:400;color:#3a414a;white-space:nowrap;">http://lucidchart.com</div><div style="position:absolute;left:1110px;top:645.2px;width:581px;text-align:center;font-size:34px;line-height:34px;color:#3a414a;white-space:nowrap">Text</div><div style="position:absolute;left:1367px;top:1561px;width:847px;height:14px;background:rgba(150,156,166,0.5);border-radius:7px;box-shadow:0 0 0 1px rgba(200,204,210,0.5)"></div><div style="position:absolute;left:3006px;top:568px;width:14px;height:312px;background:#c9ccd1;border-radius:7px;box-shadow:0 0 0 1px #e3e5e8"></div><div style="position:absolute;left:540px;top:466px;width:432px;height:552px;background:#f9fafb;border-radius:13px;box-shadow:0 10px 36px rgba(0,0,0,0.14)"></div><svg style="position:absolute;left:520px;top:720px;" width="22" height="42" viewBox="520 720 22 42"><polygon points="541,727.7 524.4,742 541,756.4" fill="#f9fafb"/></svg><svg style="position:absolute;left:590px;top:556px;" width="335" height="335" viewBox="590 556 335 335"><rect x="597.5" y="563.5" width="317.5" height="317.5" rx="9" fill="#fff" stroke="#333a44" stroke-width="2.4"/></svg><div style="position:absolute;left:596px;top:694.3px;width:320px;text-align:center;font-size:44px;line-height:44px;color:#3a414a;white-space:nowrap">Text</div><div style="position:absolute;left:596px;top:974.1px;width:320px;text-align:center;font-size:27px;line-height:27px;color:#1f2329;white-space:nowrap">Block</div><svg style="position:absolute;left:0px;top:0px;pointer-events:none;" width="3024" height="1644" viewBox="0 0 3024 1644">
<defs><filter id="ds" x="-10%" y="-10%" width="120%" height="130%"><feDropShadow dx="1.5" dy="2.5" stdDeviation="2" flood-color="#000" flood-opacity="0.28"/></filter></defs>
<g filter="url(#ds)">
<rect x="79.9" y="596" width="427.3" height="283.5" rx="25" fill="none" stroke="#f4ca5c" stroke-width="11.4"/>
<path d="M288.2,675.4 L295,669.5 C563,430 823.4,389.4 1071.6,671.3 L1078,678.8" fill="none" stroke="#f4ca5c" stroke-width="12"/>
<polygon points="253.2,708.2 275.4,648.9 314.3,690.4" fill="#f4ca5c"/>
<polygon points="1107.9,715.4 1093.6,653.6 1050.4,689.3" fill="#f4ca5c"/>
</g>
</svg><svg style="position:absolute;left:0px;top:1575px;" width="440" height="69" viewBox="0 0 2576 404">
<g fill="#22262d"><circle cx="170" cy="128" r="16"/><circle cx="170" cy="185" r="16"/><circle cx="170" cy="243" r="16"/><circle cx="170" cy="302" r="16"/></g>
<g fill="none" stroke="#22262d" stroke-width="11">
<path d="M215,128 H360 M215,185 H360 M215,243 H360 M215,302 H360"/>
<rect x="578" y="118" width="82" height="80" rx="18"/><rect x="700" y="118" width="82" height="80" rx="18"/>
<rect x="578" y="236" width="82" height="82" rx="18"/><rect x="700" y="236" width="82" height="82" rx="18"/>
</g>
<path d="M997,30 H1985 V325 Q1985,355 1955,355 H1027 Q997,355 997,325 Z" fill="#6b7280"/>
<polygon points="1805,183 1885,183 1845,243" fill="#fff"/>
<g fill="none" stroke="#22262d" stroke-width="10"><circle cx="2300" cy="215" r="100"/><path d="M2245,215 H2355 M2300,160 V270"/></g>
</svg><div style="position:absolute;left:185.5px;top:1600.4px;font-size:27px;line-height:27px;font-weight:400;color:#fff;white-space:nowrap;">Page 1</div><div style="position:absolute;left:2177.5px;top:1581px;width:2px;height:63px;background:#dfe2e7"></div><div style="position:absolute;left:2572px;top:1581px;width:2px;height:63px;background:#dfe2e7"></div><div style="position:absolute;left:2638px;top:1581px;width:2px;height:63px;background:#dfe2e7"></div><div style="position:absolute;left:2704px;top:1581px;width:2px;height:63px;background:#dfe2e7"></div><div style="position:absolute;left:2942px;top:1581px;width:2px;height:63px;background:#dfe2e7"></div><svg style="position:absolute;left:2170px;top:1578px;" width="480" height="66" viewBox="0 0 2576 354">
<g fill="none" stroke="#22262d" stroke-width="10" stroke-linejoin="round">
<path d="M182,100 H345 M182,100 V265 M182,265 H248 M345,100 V155"/>
<circle cx="182" cy="100" r="11" fill="#fff"/><circle cx="345" cy="100" r="11" fill="#fff"/><circle cx="182" cy="265" r="11" fill="#fff"/>
<polygon points="245,155 355,205 315,222 365,275 345,288 295,238 275,280"/>
<polygon points="2245,140 2340,90 2435,140 2340,190"/>
<path d="M2268,173 L2245,185 L2340,235 L2435,185 L2412,173 M2268,218 L2245,230 L2340,280 L2435,230 L2412,218"/>
</g>
<circle cx="1770" cy="182" r="85" fill="#e0e0fa"/>
<polygon points="1950,152 2022,152 1986,208" fill="#22262d"/>
</svg><div style="position:absolute;left:2250px;top:1596.8px;font-size:30.6px;line-height:30.6px;font-weight:400;color:#282c33;white-space:nowrap;">Selected objects</div><div style="position:absolute;left:2494px;top:1603.7px;font-size:17.5px;line-height:17.5px;font-weight:700;color:#3b40c2;white-space:nowrap;">0</div><svg style="position:absolute;left:2630px;top:1578px;" width="394" height="66" viewBox="0 0 2576 432">
<g fill="none" stroke="#22262d" stroke-linejoin="round" stroke-linecap="round">
<circle cx="275" cy="220" r="112" stroke-width="10"/>
<polygon points="273,150 335,282 273,255 213,282" stroke-width="10"/>
<path d="M618,220 H795 M1742,220 H1920 M1830,132 V312" stroke-width="16" stroke-linecap="butt"/>
<path d="M2200,108 L2285,190 M2200,108 H2262 M2200,108 V165 M2430,108 L2345,190 M2430,108 H2370 M2430,108 V165 M2200,335 L2282,252 M2200,335 H2262 M2200,335 V278 M2430,335 L2345,252 M2430,335 H2370 M2430,335 V278" stroke-width="12"/>
</g>
</svg><div style="position:absolute;left:2795px;top:1599.4px;font-size:27.5px;line-height:27.5px;font-weight:400;color:#282c33;white-space:nowrap;">80%</div><svg style="position:absolute;left:0px;top:1618px;" width="26" height="26" viewBox="0 0 26 26"><path d="M0,0 Q0,26 26,26 H0 Z" fill="#b9a4a0"/></svg><svg style="position:absolute;left:2998px;top:1618px;" width="26" height="26" viewBox="0 0 26 26"><path d="M26,0 Q26,26 0,26 H26 Z" fill="#b9a4a0"/></svg>
</body></html>
